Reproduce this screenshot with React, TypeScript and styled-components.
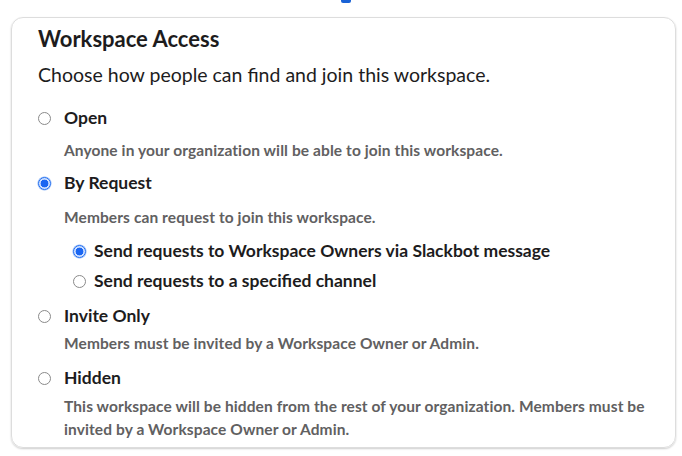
import React from "react";
import styled, { createGlobalStyle } from "styled-components";

const Global = createGlobalStyle`
  html, body { margin: 0; padding: 0; background: #ffffff; }
  body { font-family: Lato, "Noto Sans", sans-serif; color: #1d1c1d; -webkit-font-smoothing: antialiased; }
  * { box-sizing: border-box; }
`;

const Page = styled.div`
  width: 682px;
  height: 456px;
  position: relative;
  overflow: hidden;
  padding: 17px 6px 0 11px;
`;

const TopMark = styled.div`
  position: absolute;
  top: 0;
  left: 341px;
  width: 10px;
  height: 3px;
  background: #1a62d6;
  border-radius: 0 0 2px 2px;
`;

const Card = styled.section`
  width: 665px;
  height: 431px;
  border: 1px solid #dddddd;
  border-radius: 12px;
  box-shadow: 0 1px 2px rgba(0, 0, 0, 0.2);
  padding: 8px 22px 0 26px;
  display: flex;
  flex-direction: column;
`;

const Title = styled.h2`
  margin: 0;
  font-size: 22px;
  line-height: 26px;
  font-weight: 700;
  color: #1d1c1d;
`;

const Subtitle = styled.p`
  margin: 10px 0 0 0;
  font-size: 19.5px;
  line-height: 26px;
  font-weight: 400;
  color: #1d1c1d;
`;

const Options = styled.div`
  margin-top: 19px;
  display: flex;
  flex-direction: column;
`;

const Option = styled.div<{ $gap?: number }>`
  display: flex;
  flex-direction: column;
  margin-top: ${(p) => p.$gap ?? 0}px;
`;

const Row = styled.label<{ $indent?: number; $space?: number }>`
  display: flex;
  align-items: center;
  gap: ${(p) => p.$space ?? 13}px;
  padding-left: ${(p) => p.$indent ?? 0}px;
  font-size: 17.5px;
  line-height: 22px;
  font-weight: 700;
  color: #1d1c1d;
  cursor: pointer;
`;

const Radio = styled.span<{ $checked?: boolean }>`
  flex: none;
  width: 13px;
  height: 13px;
  border-radius: 50%;
  border: 1px solid ${(p) => (p.$checked ? "#1d6cf0" : "#8a8a8a")};
  background: ${(p) =>
    p.$checked
      ? "radial-gradient(circle, #1a66f2 0 3.6px, #cfe0ff 4.2px 100%)"
      : "#ffffff"};
  box-shadow: ${(p) => (p.$checked ? "0 0 0 0.5px rgba(29,108,240,0.5)" : "none")};
`;

const Desc = styled.p<{ $top?: number }>`
  margin: ${(p) => p.$top ?? 10}px 0 0 26px;
  font-size: 15.5px;
  line-height: 23px;
  letter-spacing: 0.1px;
  font-weight: 700;
  color: #616061;
`;

const Nested = styled.div`
  display: flex;
  flex-direction: column;
  gap: 8px;
  margin-top: 11px;
`;

export default function App() {
  return (
    <>
      <Global />
      <Page>
        <TopMark />
        <Card>
          <Title>Workspace Access</Title>
          <Subtitle>Choose how people can find and join this workspace.</Subtitle>
          <Options>
            <Option>
              <Row>
                <Radio />
                Open
              </Row>
              <Desc $top={10}>Anyone in your organization will be able to join this workspace.</Desc>
            </Option>
            <Option $gap={10}>
              <Row>
                <Radio $checked />
                By Request
              </Row>
              <Desc $top={12}>Members can request to join this workspace.</Desc>
              <Nested>
                <Row $indent={35} $space={8}>
                  <Radio $checked />
                  Send requests to Workspace Owners via Slackbot message
                </Row>
                <Row $indent={35} $space={8}>
                  <Radio />
                  Send requests to a specified channel
                </Row>
              </Nested>
            </Option>
            <Option $gap={13}>
              <Row>
                <Radio />
                Invite Only
              </Row>
              <Desc $top={5}>Members must be invited by a Workspace Owner or Admin.</Desc>
            </Option>
            <Option $gap={12}>
              <Row>
                <Radio />
                Hidden
              </Row>
              <Desc $top={6}>
                This workspace will be hidden from the rest of your organization. Members must be invited by a
                Workspace Owner or Admin.
              </Desc>
            </Option>
          </Options>
        </Card>
      </Page>
    </>
  );
}
